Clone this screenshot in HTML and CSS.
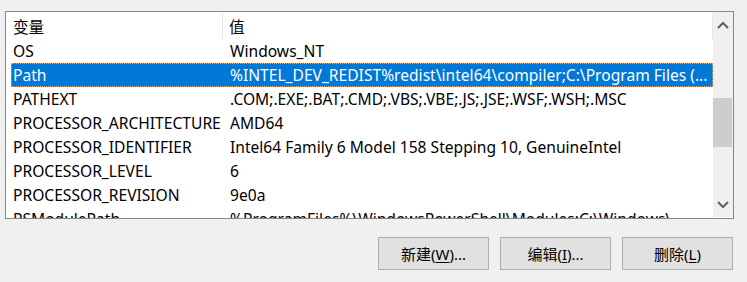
FILE: index.html
```html
<!DOCTYPE html>
<html lang="zh-CN">
<head>
<meta charset="utf-8">
<link rel="stylesheet" href="styles.css">
</head>
<body>
<div class="panel">
  <div class="listbox">
    <div class="list">
      <div class="header">
        <div class="hcell c1">变量</div>
        <div class="hcell c2">值</div>
      </div>
      <div class="row"><div class="cell c1">OS</div><div class="cell c2">Windows_NT</div></div>
      <div class="row selected"><div class="cell c1">Path</div><div class="cell c2">%INTEL_DEV_REDIST%redist\intel64\compiler;C:\Program Files (...</div></div>
      <div class="row"><div class="cell c1">PATHEXT</div><div class="cell c2">.COM;.EXE;.BAT;.CMD;.VBS;.VBE;.JS;.JSE;.WSF;.WSH;.MSC</div></div>
      <div class="row"><div class="cell c1">PROCESSOR_ARCHITECTURE</div><div class="cell c2">AMD64</div></div>
      <div class="row"><div class="cell c1">PROCESSOR_IDENTIFIER</div><div class="cell c2">Intel64 Family 6 Model 158 Stepping 10, GenuineIntel</div></div>
      <div class="row"><div class="cell c1">PROCESSOR_LEVEL</div><div class="cell c2">6</div></div>
      <div class="row"><div class="cell c1">PROCESSOR_REVISION</div><div class="cell c2">9e0a</div></div>
      <div class="row"><div class="cell c1">PSModulePath</div><div class="cell c2">%ProgramFiles%\WindowsPowerShell\Modules;C:\Windows\...</div></div>
    </div>
    <div class="scrollbar">
      <div class="arrow">
        <svg width="12" height="8" viewBox="0 0 12 8"><path d="M1 7 L6 2 L11 7" fill="none" stroke="#606060" stroke-width="2"/></svg>
      </div>
      <div class="track">
        <div class="thumb"></div>
      </div>
      <div class="arrow">
        <svg width="12" height="8" viewBox="0 0 12 8"><path d="M1 1 L6 6 L11 1" fill="none" stroke="#606060" stroke-width="2"/></svg>
      </div>
    </div>
  </div>
  <div class="buttons">
    <button class="btn">新建(<u>W</u>)...</button>
    <button class="btn">编辑(<u>I</u>)...</button>
    <button class="btn">删除(<u>L</u>)</button>
  </div>
</div>
</body>
</html>
```

FILE: styles.css
```css
* { box-sizing: border-box; }
html, body { margin: 0; padding: 0; }
body {
  background: #f0f0f0;
  font-family: "Noto Sans", "Noto Sans CJK SC", sans-serif;
  font-size: 15.6px;
  color: #000;
  width: 747px;
  height: 282px;
  overflow: hidden;
}
.panel {
  padding: 11px 0 0 5px;
}
.listbox {
  width: 729px;
  height: 208px;
  border: 1px solid #828790;
  background: #fff;
  display: flex;
  overflow: hidden;
}
.list {
  flex: 1;
  overflow: hidden;
  padding-left: 5px;
}
.header {
  display: flex;
  height: 27px;
  align-items: stretch;
}
.hcell {
  display: flex;
  align-items: center;
  padding-left: 2px;
  white-space: nowrap;
}
.header .c1 {
  width: 212px;
  border-right: 1px solid #e5e5e5;
  margin: 1px 0 0 0;
}
.header .c2 {
  flex: 1;
  padding-left: 6px;
  border-right: 1px solid #e5e5e5;
  margin-top: 1px;
}
.row {
  display: flex;
  height: 24px;
  align-items: center;
  white-space: nowrap;
  border: 1px solid transparent;
}
.row .cell { padding-left: 1px; }
.row .c1 { width: 212px; flex: none; }
.row .c2 { flex: 1; padding-left: 6px; overflow: hidden; }
.row.selected {
  background: #0078d7;
  color: #fff;
  border: 1px dotted #f7a450;
}
.scrollbar {
  width: 20px;
  flex: none;
  background: #f0f0f0;
  display: flex;
  flex-direction: column;
  margin-bottom: 1px;
}
.arrow {
  height: 25px;
  display: flex;
  align-items: center;
  justify-content: center;
  flex: none;
}
.track {
  flex: 1;
  padding-top: 61px;
}
.thumb {
  width: 19px;
  height: 49px;
  background: #cdcdcd;
}
.buttons {
  display: flex;
  justify-content: flex-end;
  gap: 11px;
  padding: 18px 14px 0 0;
}
.btn {
  width: 111px;
  height: 33px;
  background: #e1e1e1;
  border: 1px solid #adadad;
  font-family: "Noto Sans", "Noto Sans CJK SC", sans-serif;
  font-size: 15px;
  color: #000;
  padding: 0;
  margin: 0;
}
.btn u { text-underline-offset: 2px; }
```
